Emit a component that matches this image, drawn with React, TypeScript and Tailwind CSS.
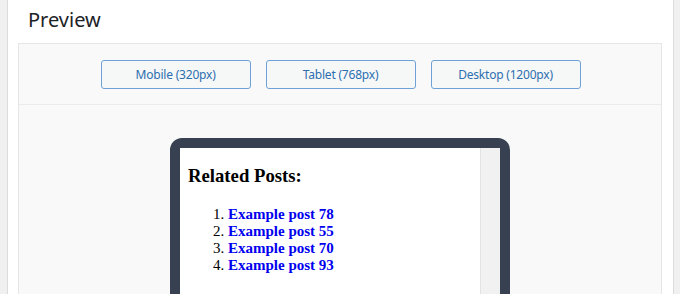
import React from "react";

export default function App() {
  const posts = [78, 55, 70, 93];
  const buttons = ["Mobile (320px)", "Tablet (768px)", "Desktop (1200px)"];
  return (
    <div className="w-[680px] h-[294px] overflow-hidden bg-[#f0f0f1] flex items-start">
      <div className="ml-[7px] w-[667px] h-[294px] shrink-0 border-x border-[#dcdcde] bg-white flex flex-col overflow-hidden">
        <h2
          className="shrink-0 pl-[20px] pt-[5px] h-[43px] text-[20px] leading-[30px] text-[#1d2327]"
          style={{ fontFamily: '"Noto Sans", "Open Sans", sans-serif' }}
        >
          Preview
        </h2>
        <div className="shrink-0 ml-[10px] w-[644px] border border-[#e6e6e6] bg-[#f9f9f9] flex flex-col">
          <div className="shrink-0 flex justify-center gap-[15px] pt-[16px] pb-[15px] pl-[1px] border-b border-[#ebebeb]">
            {buttons.map((b) => (
              <button
                key={b}
                className="w-[150px] h-[29px] rounded-[3px] border border-[#6ea2d6] bg-[#f6f7f7] text-[#2c6fb0] text-[12px] tracking-[-0.2px] leading-[27px]"
                style={{ fontFamily: '"Noto Sans", "Open Sans", sans-serif' }}
              >
                {b}
              </button>
            ))}
          </div>
          <div className="shrink-0 flex justify-center pt-[33px]">
            <div className="shrink-0 w-[340px] h-[400px] border-[10px] border-[#374151] rounded-[12px] flex">
              <div
                className="w-[300px] bg-white pl-[8px] pt-[17px] text-black"
                style={{ fontFamily: '"Liberation Serif", "Times New Roman", serif' }}
              >
                <h3 className="text-[18.72px] leading-[21px] font-bold">Related Posts:</h3>
                <ol className="list-decimal pl-[40px] mt-[19.5px] text-[15px] leading-[17px]">
                  {posts.map((p) => (
                    <li key={p}>
                      <a href="#" className="text-[#0000ee] font-bold">
                        Example post {p}
                      </a>
                    </li>
                  ))}
                </ol>
              </div>
              <div className="w-[20px] bg-[#f1f1f1] border-l border-[#e3e3e3]" />
            </div>
          </div>
        </div>
      </div>
    </div>
  );
}
